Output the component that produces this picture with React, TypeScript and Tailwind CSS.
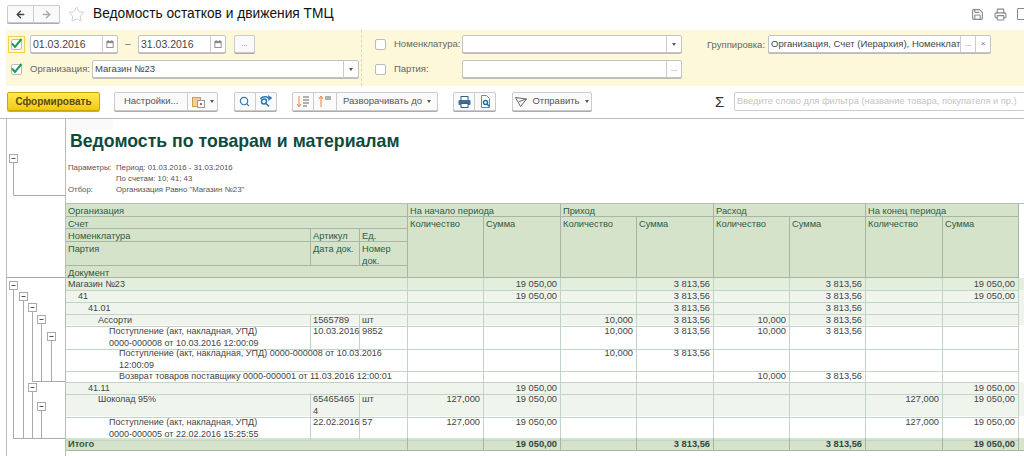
import React, { FC } from "react";
import { ArrowLeft, ArrowRight, Star, Save, Printer, Search } from "lucide-react";

const COLS = "grid grid-cols-[245px_49px_48px_76px_77px_76px_77px_76px_76px_77px_76px]";

const Caret: FC = () => (
  <span className="inline-block w-0 h-0 border-x-[2.5px] border-x-transparent border-t-[3px] border-t-[#555]" />
);

const Calendar: FC = () => (
  <svg width="8" height="8" viewBox="0 0 9 9">
    <rect x="1" y="1.5" width="7" height="7" fill="#fff" stroke="#888" />
    <rect x="1" y="1.5" width="7" height="2" fill="#888" />
    <path d="M2.5 0v2M6.5 0v2" stroke="#888" />
  </svg>
);

const Check: FC<{ on?: boolean }> = ({ on }) => (
  <span className="flex w-[11px] h-[11px] border border-[#bbb] rounded-[2px] bg-white items-center justify-center overflow-visible">
    {on && (
      <svg width="13" height="13" viewBox="0 0 13 13" className="shrink-0 -mt-[2px]">
        <path d="M2 6.5l3 3.5L11.5 2" stroke="#1f9d55" strokeWidth="2" fill="none" />
      </svg>
    )}
  </span>
);

const Field: FC<{ w: string; value?: string; btn?: React.ReactNode; big?: boolean }> = ({ w, value, btn, big }) => (
  <div className={`flex h-[18px] bg-white border border-[#c4c4c4] rounded-[2px] shadow-[0_1px_0_#bbb] text-[#444] ${big ? "text-[10.5px]" : "text-[9.5px]"} ${w}`}>
    <span className="flex-1 min-w-0 px-[2px] leading-[16px] overflow-hidden whitespace-nowrap">{value}</span>
    {btn}
  </div>
);

const FieldBtn: FC<{ children: React.ReactNode }> = ({ children }) => (
  <span className="flex w-[15px] shrink-0 border-l border-[#ccc] items-center justify-center text-[8px] text-[#777]">
    {children}
  </span>
);

const Group: FC<{ w: string; ml: string; children: React.ReactNode }> = ({ w, ml, children }) => (
  <div className={`flex h-[19px] bg-[#fafafa] border border-[#ccc] rounded-[2px] shadow-[0_1px_0_#aaa] text-[9.5px] text-[#555] ${w} ${ml}`}>
    {children}
  </div>
);

const Seg: FC<{ w: string; last?: boolean; children: React.ReactNode }> = ({ w, last, children }) => (
  <span className={`flex items-center justify-center gap-[5px] ${w} ${last ? "" : "border-r border-[#ccc]"}`}>
    {children}
  </span>
);

const SortIcon: FC<{ down?: boolean }> = ({ down }) => (
  <svg width="14" height="13" viewBox="0 0 14 13">
    <path d={down ? "M3 1v10M1 9l2 3 2-3" : "M3 12V2M1 4l2-3 2 3"} stroke="#e8824a" fill="none" />
    <path d={down ? "M7 2h6M7 5h6M7 8h6M7 11h4" : "M7 2h6M7 4h6"} stroke="#666" />
  </svg>
);

type Row = {
  h: string;
  bg: string;
  name: string;
  pad?: string;
  art?: string;
  unit?: string;
  vals: string[];
};

const E = "";
const rows: Row[] = [
  { h: "h-[12px]", bg: "bg-[#e3eedd]", name: "Магазин №23", pad: "pl-[2px]", vals: [E, "19 050,00", E, "3 813,56", E, "3 813,56", E, "19 050,00"] },
  { h: "h-[12px]", bg: "bg-[#eff5ec]", name: "41", pad: "pl-[12px]", vals: [E, "19 050,00", E, "3 813,56", E, "3 813,56", E, "19 050,00"] },
  { h: "h-[12px]", bg: "bg-[#eff5ec]", name: "41.01", pad: "pl-[22px]", vals: [E, E, E, "3 813,56", E, "3 813,56", E, E] },
  { h: "h-[11px]", bg: "bg-[#eff5ec]", name: "Ассорти", pad: "pl-[32px]", art: "1565789", unit: "шт", vals: [E, E, "10,000", "3 813,56", "10,000", "3 813,56", E, E] },
  { h: "h-[22px]", bg: "bg-white", name: "Поступление (акт, накладная, УПД) 0000-000008 от 10.03.2016 12:00:09", pad: "pl-[43px] pr-[40px]", art: "10.03.2016", unit: "9852", vals: [E, E, "10,000", "3 813,56", "10,000", "3 813,56", E, E] },
  { h: "h-[23px]", bg: "bg-white", name: "Поступление (акт, накладная, УПД) 0000-000008 от 10.03.2016 12:00:09", pad: "pl-[53px]", vals: [E, E, "10,000", "3 813,56", E, E, E, E] },
  { h: "h-[12px]", bg: "bg-white", name: "Возврат товаров поставщику 0000-000001 от 11.03.2016 12:00:01", pad: "pl-[53px]", vals: [E, E, E, E, "10,000", "3 813,56", E, E] },
  { h: "h-[11px]", bg: "bg-[#eff5ec]", name: "41.11", pad: "pl-[22px]", vals: [E, "19 050,00", E, E, E, E, E, "19 050,00"] },
  { h: "h-[23px]", bg: "bg-[#eff5ec]", name: "Шоколад 95%", pad: "pl-[32px]", art: "65465465 4", unit: "шт", vals: ["127,000", "19 050,00", E, E, E, E, "127,000", "19 050,00"] },
  { h: "h-[22px]", bg: "bg-white", name: "Поступление (акт, накладная, УПД) 0000-000005 от 22.02.2016 15:25:55", pad: "pl-[43px] pr-[40px]", art: "22.02.2016", unit: "57", vals: ["127,000", "19 050,00", E, E, E, E, "127,000", "19 050,00"] },
];

const hCell = "bg-[#d5e3cb] border-r border-b border-[#a9b5a4] pl-[2px] pt-[1px] leading-[12px] text-[#2f5a45]";
const dCell = "border-r border-b border-[#c0d4c8] pl-[2px] leading-[12px]";

const TreeBox: FC<{ x: number; y: number }> = ({ x, y }) => (
  <g>
    <rect x={x - 3.5} y={y - 3.5} width="8" height="8" fill="#fff" stroke="#aaa" />
    <path d={`M${x - 1.5} ${y + 0.5}h4`} stroke="#555" />
  </g>
);

// tree of the report groups, in the left gutter
const ReportTree: FC = () => (
  <svg width="58" height="332" viewBox="0 0 58 332" className="shrink-0">
    <g stroke="#aaa" fill="none">
      <path d="M6.5 42V76.5H58" />
      <path d="M0 158.5H58" />
      <path d="M6.5 170V319.5H58" />
      <path d="M16.5 180V319.5" />
      <path d="M25.5 191V262.5H58" />
      <path d="M34.5 203V262.5" />
      <path d="M44.5 220V262.5" />
      <path d="M25.5 270V319.5" />
      <path d="M34.5 290V319.5" />
    </g>
    <TreeBox x={6} y={39} />
    <TreeBox x={6} y={166} />
    <TreeBox x={16} y={177} />
    <TreeBox x={25} y={188} />
    <TreeBox x={34} y={200} />
    <TreeBox x={44} y={217} />
    <TreeBox x={25} y={268} />
    <TreeBox x={34} y={287} />
  </svg>
);

const App: FC = () => {
  return (
    <div className="w-[1024px] h-[456px] overflow-hidden bg-white font-['Liberation_Sans',Arial,sans-serif]">
      {/* title bar */}
      <div className="flex items-center h-[30px] pl-[7px] pb-[2px]">
        <div className="flex h-[18px] w-[53px] bg-[#fafafa] border border-[#ccc] rounded-[2px] shadow-[0_1px_0_#aaa]">
          <span className="flex flex-1 items-center justify-center border-r border-[#ccc]">
            <ArrowLeft size={11} strokeWidth={3} className="text-[#444]" />
          </span>
          <span className="flex flex-1 items-center justify-center">
            <ArrowRight size={11} strokeWidth={3} className="text-[#aaa]" />
          </span>
        </div>
        <Star size={17} strokeWidth={1} className="ml-[8px] text-[#bbb]" />
        <span className="ml-[8px] text-[13.75px] text-[#111] whitespace-nowrap">Ведомость остатков и движения ТМЦ</span>
        <div className="ml-auto flex items-center gap-[10px] text-[#888] -mr-[6px]">
          <Save size={13} />
          <Printer size={13} />
          <span className="w-[13px] h-[12px] border border-[#888] rounded-[1px]" />
        </div>
      </div>

      {/* filters */}
      <div className="flex ml-[6px] h-[56px] bg-[#fdf8d9] text-[9.5px] text-[#666]">
        <div className="w-[356px] border-r border-dashed border-[#ddd8b8] pt-[5px] pl-[2px]">
          <div className="flex items-center h-[18px]">
            <span className="flex items-center justify-center w-[17px] h-[17px] border border-[#f0d050]">
              <Check on />
            </span>
            <Field w="w-[88px] ml-[5px]" value="01.03.2016" big btn={<FieldBtn><Calendar /></FieldBtn>} />
            <span className="w-[20px] text-center text-[#555]">–</span>
            <Field w="w-[88px]" value="31.03.2016" big btn={<FieldBtn><Calendar /></FieldBtn>} />
            <span className="flex ml-[8px] w-[21px] h-[18px] bg-[#fafafa] border border-[#ccc] rounded-[2px] shadow-[0_1px_0_#aaa] justify-center text-[8px] leading-[15px] text-[#888]">...</span>
          </div>
          <div className="flex items-center h-[18px] mt-[7px]">
            <span className="ml-[3px]"><Check on /></span>
            <span className="ml-[8px] w-[62px] whitespace-nowrap">Организация:</span>
            <Field w="w-[267px]" value="Магазин №23" btn={<FieldBtn><Caret /></FieldBtn>} />
          </div>
        </div>
        <div className="w-[339px] pt-[5px] pl-[13px]">
          <div className="flex items-center h-[18px]">
            <Check />
            <span className="ml-[8px] w-[68px] whitespace-nowrap">Номенклатура:</span>
            <Field w="w-[220px]" btn={<FieldBtn><Caret /></FieldBtn>} />
          </div>
          <div className="flex items-center h-[18px] mt-[7px]">
            <Check />
            <span className="ml-[8px] w-[68px]">Партия:</span>
            <Field w="w-[220px]" btn={<FieldBtn>...</FieldBtn>} />
          </div>
        </div>
        <div className="flex items-start pt-[5px] pl-[6px]">
          <span className="mt-[3px] w-[61px] whitespace-nowrap">Группировка:</span>
          <Field
            w="w-[223px]"
            value="Организация, Счет (Иерархия), Номенклат"
            btn={
              <>
                <FieldBtn>...</FieldBtn>
                <FieldBtn>×</FieldBtn>
              </>
            }
          />
        </div>
      </div>

      {/* toolbar */}
      <div className="flex items-center h-[33px] pl-[7px] pb-[1px] border-b border-[#bbb]">
        <span className="flex w-[93px] h-[19px] items-center justify-center rounded-[2px] border border-[#c8a800] bg-gradient-to-b from-[#ffe94d] to-[#f5c800] shadow-[0_1px_0_#aaa] text-[10px] font-bold text-[#5a4a10]">
          Сформировать
        </span>
        <Group w="w-[104px]" ml="ml-[14px]">
          <Seg w="w-[74px]">Настройки...</Seg>
          <Seg w="w-[29px]" last>
            <svg width="13" height="13" viewBox="0 0 13 13">
              <rect x="0.5" y="2.5" width="8" height="9" fill="#f3d28a" stroke="#c9a04e" />
              <rect x="5.5" y="5.5" width="7" height="7" fill="#fff" stroke="#999" />
              <rect x="8" y="8" width="2" height="2" fill="#d9534f" />
            </svg>
            <Caret />
          </Seg>
        </Group>
        <Group w="w-[43px]" ml="ml-[16px]">
          <Seg w="w-[21px]"><Search size={11} strokeWidth={2.5} className="text-[#2b78b0]" /></Seg>
          <Seg w="w-[21px]" last>
            <svg width="13" height="13" viewBox="0 0 13 13" fill="none" stroke="#2b78b0" strokeWidth="1.5">
              <circle cx="5" cy="6.5" r="2.5" />
              <path d="M7 8.5l3 3M1.5 4C3 1.5 7 1 9.5 3" />
              <path d="M10 1.5l2 1.5-2 1.5z" fill="#2b78b0" />
            </svg>
          </Seg>
        </Group>
        <Group w="w-[146px]" ml="ml-[15px]">
          <Seg w="w-[21px]"><SortIcon down /></Seg>
          <Seg w="w-[23px]"><SortIcon /></Seg>
          <Seg w="w-[100px]" last>Разворачивать до <Caret /></Seg>
        </Group>
        <Group w="w-[43px]" ml="ml-[15px]">
          <Seg w="w-[22px]">
            <svg width="13" height="12" viewBox="0 0 13 12">
              <rect x="3" y="0.5" width="7" height="4" fill="#fff" stroke="#3a5f80" />
              <rect x="0.5" y="4" width="12" height="5" rx="1" fill="#3a6f98" />
              <rect x="3" y="7.5" width="7" height="4" fill="#fff" stroke="#3a5f80" />
            </svg>
          </Seg>
          <Seg w="w-[20px]" last>
            <svg width="11" height="13" viewBox="0 0 11 13" fill="none">
              <path d="M1.5.5h5l3 3v9h-8z" fill="#fff" stroke="#6a8aa0" />
              <circle cx="5.5" cy="7.5" r="2" stroke="#1f6fa8" strokeWidth="1.5" />
              <path d="M7 9l2.5 2.5" stroke="#1f6fa8" strokeWidth="1.5" />
            </svg>
          </Seg>
        </Group>
        <Group w="w-[80px]" ml="ml-[16px]">
          <Seg w="w-[80px]" last>
            <svg width="12" height="10" viewBox="0 0 12 10" fill="none" stroke="#666">
              <path d="M.5.5l11 1.5-6 7.5zM4 4.5L11.5 2" />
            </svg>
            Отправить <Caret />
          </Seg>
        </Group>
        <span className="ml-[123px] w-[19px] text-[15px] leading-none text-[#333]">Σ</span>
        <div className="flex-1 h-[19px] -mr-px bg-white border border-[#ccc] rounded-[2px] px-[2px] text-[9.3px] leading-[16px] text-[#c4c4c4] whitespace-nowrap overflow-hidden">
          Введите слово для фильтра (название товара, покупателя и пр.)
        </div>
      </div>

      {/* report */}
      <div className="flex ml-[6px] h-[337px] border-l border-[#bbb]">
        <ReportTree />
        <div className="flex-1 min-w-0 border-l border-[#bbb] text-[9.3px] text-[#444]">
          <div className="w-[47px] h-[11px] bg-[#fafafa]" />
          <div className="h-[14px] mt-[1px] pl-[4px] text-[17.7px] leading-[20px] font-bold text-[#0f4a3f] whitespace-nowrap">
            Ведомость по товарам и материалам
          </div>
          <div className="mt-[17px] ml-[2px] text-[7.8px] leading-[11px] text-[#555]">
            <div className="flex"><span className="w-[48px]">Параметры:</span><span>Период: 01.03.2016 - 31.03.2016</span></div>
            <div className="flex"><span className="w-[48px]" /><span>По счетам: 10; 41; 43</span></div>
            <div className="flex"><span className="w-[48px]">Отбор:</span><span>Организация Равно "Магазин №23"</span></div>
          </div>

          {/* column headers */}
          <div className={`${COLS} grid-rows-[13px_12px_13px_24px_12px] mt-[8px] border-t border-[#bbb]`}>
            <div className={`${hCell} col-span-3`}>Организация</div>
            <div className={`${hCell} col-span-2`}>На начало периода</div>
            <div className={`${hCell} col-span-2`}>Приход</div>
            <div className={`${hCell} col-span-2`}>Расход</div>
            <div className={`${hCell} col-span-2`}>На конец периода</div>
            <div className={`${hCell} col-span-3`}>Счет</div>
            {["Количество", "Сумма", "Количество", "Сумма", "Количество", "Сумма", "Количество", "Сумма"].map((t, i) => (
              <div key={i} className={`${hCell} row-span-4`} style={{ gridRow: "2 / span 4", gridColumn: i + 4 }}>
                {t}
              </div>
            ))}
            <div className={hCell} style={{ gridRow: 3, gridColumn: 1 }}>Номенклатура</div>
            <div className={hCell} style={{ gridRow: 3, gridColumn: 2 }}>Артикул</div>
            <div className={hCell} style={{ gridRow: 3, gridColumn: 3 }}>Ед.</div>
            <div className={hCell} style={{ gridRow: 4, gridColumn: 1 }}>Партия</div>
            <div className={hCell} style={{ gridRow: 4, gridColumn: 2 }}>Дата док.</div>
            <div className={hCell} style={{ gridRow: 4, gridColumn: 3 }}>Номер док.</div>
            <div className={`${hCell} col-span-3`} style={{ gridRow: 5, gridColumn: "1 / span 3" }}>Документ</div>
          </div>

          {/* data rows */}
          {rows.map((r, i) => (
            <div key={i} className={`${COLS} ${r.h} ${r.bg}`}>
              {r.art === undefined ? (
                <div className={`${dCell} ${r.pad} col-span-3 text-[9px]`}>{r.name}</div>
              ) : (
                <>
                  <div className={`${dCell} ${r.pad} text-[9px]`}>{r.name}</div>
                  <div className={dCell}>{r.art}</div>
                  <div className={dCell}>{r.unit}</div>
                </>
              )}
              {r.vals.map((v, j) => (
                <div key={j} className={`${dCell} text-right pr-[3px]`}>{v}</div>
              ))}
            </div>
          ))}
          <div className={`${COLS} h-[13px] bg-[#d5e3cb] border-b border-[#a9b5a4] font-bold text-[#33473a]`}>
            <div className="col-span-3 border-r border-[#a9b5a4] pl-[2px] leading-[12px] text-[#2f5a45]">Итого</div>
            {[E, "19 050,00", E, "3 813,56", E, "3 813,56", E, "19 050,00"].map((v, j) => (
              <div key={j} className="border-r border-[#a9b5a4] text-right pr-[3px] leading-[12px]">{v}</div>
            ))}
          </div>
        </div>
      </div>
    </div>
  );
};

export default App;
